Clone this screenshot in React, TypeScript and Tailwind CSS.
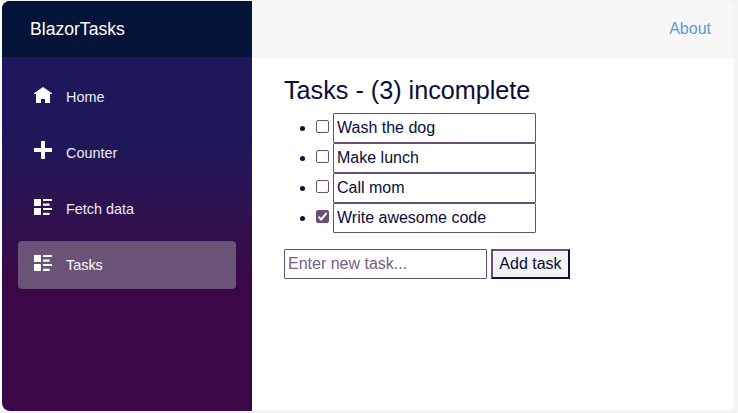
import { useState } from "react";

type IconName = "home" | "plus" | "list";

function NavIcon({ name }: { name: IconName }) {
  return (
    <svg width="18" height="18" viewBox="0 0 18 18" fill="#ffffff" className="block">
      {name === "home" && (
        <path d="M9 0L0 6.2V7H2V16H7V12H11V16H16V7H18V6.2Z" />
      )}
      {name === "plus" && <path d="M7 0H11V7H18V11H11V18H7V11H0V7H7Z" />}
      {name === "list" && (
        <path d="M0 0H7V7H0ZM9 0H18V2H9ZM9 4.5H15.6V6.7H9ZM0 9H7V16H0ZM9 9H18V11H9ZM9 13.7H15.6V16H9Z" />
      )}
    </svg>
  );
}

const links: { label: string; icon: IconName; active?: boolean }[] = [
  { label: "Home", icon: "home" },
  { label: "Counter", icon: "plus" },
  { label: "Fetch data", icon: "list" },
  { label: "Tasks", icon: "list", active: true },
];

const iconMargin = { home: "mb-[2px]", plus: "mb-[6px]", list: "mb-[2px]" };

function Checkbox({ checked, onToggle }: { checked: boolean; onToggle: () => void }) {
  return (
    <button
      role="checkbox"
      aria-checked={checked}
      onClick={onToggle}
      className={
        "mb-[3px] ml-[11px] flex size-[13px] shrink-0 items-center justify-center rounded-[2px] border border-[#694f76] " +
        (checked ? "bg-[#694f76]" : "bg-white")
      }
    >
      {checked && (
        <svg width="11" height="11" viewBox="0 0 11 11" fill="none" stroke="#ffffff" strokeWidth="2">
          <path d="M1.5 5.7L4.2 8.4L9.5 2" />
        </svg>
      )}
    </button>
  );
}

export default function App() {
  const [tasks, setTasks] = useState([
    { title: "Wash the dog", done: false },
    { title: "Make lunch", done: false },
    { title: "Call mom", done: false },
    { title: "Write awesome code", done: true },
  ]);
  const [draft, setDraft] = useState("");

  const patch = (index: number, change: { title?: string; done?: boolean }) =>
    setTasks(tasks.map((t, i) => (i === index ? { ...t, ...change } : t)));

  const addTask = () => {
    if (!draft.trim()) return;
    setTasks([...tasks, { title: draft, done: false }]);
    setDraft("");
  };

  return (
    <div className="h-screen overflow-hidden bg-[#f4f4f4] pt-px pr-1 pb-[2px] font-['Liberation_Sans',Arial,sans-serif] text-base text-[#0a0b3b]">
      <div className="h-full rounded-r-[8px] bg-white pl-[2px]">
        <div className="flex h-full overflow-hidden rounded-[8px]">
          <aside className="flex w-[250px] shrink-0 flex-col bg-linear-to-b from-[#1d185b] from-[33%] to-[#3a0847] to-[67%]">
            <div className="flex h-14 items-center bg-[#061439] pl-7 text-[17.6px] text-white">BlazorTasks</div>
            <nav className="flex flex-col gap-2 px-4 pt-4 text-[14.4px]">
              {links.map((link) => (
                <a
                  key={link.label}
                  href="#"
                  className={
                    "flex h-12 items-center rounded-[4px] pl-4 " +
                    (link.active ? "bg-[#6b5277] text-white" : "text-[#ececf0]")
                  }
                >
                  <span className={"w-8 " + iconMargin[link.icon]}>
                    <NavIcon name={link.icon} />
                  </span>
                  <span className="pt-[2px]">{link.label}</span>
                </a>
              ))}
            </nav>
          </aside>
          <main className="flex-1">
            <div className="flex h-[57px] items-center justify-end border-b border-[#f2f2f2] bg-[#f7f7f7] pr-[23px] pb-px text-[#5c9bd8]">
              <a href="#">About</a>
            </div>
            <div className="px-8 pt-[17px]">
              <h3 className="mb-2 text-[25.2px] leading-[30px]">
                Tasks - ({tasks.filter((t) => !t.done).length}) incomplete
              </h3>
              <ul className="mb-4">
                {tasks.map((task, i) => (
                  <li key={i} className="flex h-[30px] items-center pl-4">
                    <span className="mt-px size-[5px] rounded-full bg-[#061439]" />
                    <Checkbox checked={task.done} onToggle={() => patch(i, { done: !task.done })} />
                    <input
                      value={task.title}
                      onChange={(e) => patch(i, { title: e.target.value })}
                      className="ml-1 h-[30px] w-[203px] rounded-[1px] border border-[#694f76] bg-white px-[3px]"
                    />
                  </li>
                ))}
              </ul>
              <div className="flex gap-1">
                <input
                  value={draft}
                  onChange={(e) => setDraft(e.target.value)}
                  placeholder="Enter new task..."
                  className="h-[30px] w-[203px] rounded-[1px] border border-[#694f76] bg-white px-[3px] placeholder:text-[#755f87]"
                />
                <button
                  onClick={addTask}
                  className="h-[30px] w-[79px] border-2 border-t-[#694f76] border-r-[#061439] border-b-[#061439] border-l-[#694f76] bg-[#f3f3f3] whitespace-nowrap"
                >
                  Add task
                </button>
              </div>
            </div>
          </main>
        </div>
      </div>
    </div>
  );
}
